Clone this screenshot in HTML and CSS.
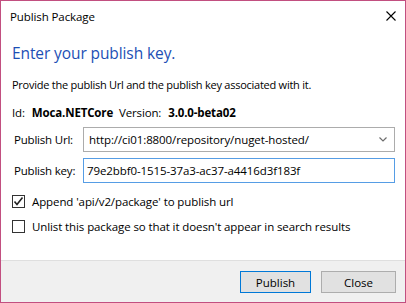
FILE: index.html
```html
<!DOCTYPE html>
<html>
<head>
<meta charset="utf-8">
<link rel="stylesheet" href="styles.css">
</head>
<body>
<div class="window">
  <div class="titlebar">
    <span class="title">Publish Package</span>
    <svg class="close" width="10" height="10" viewBox="0 0 10 10"><path d="M0.5 0.5 L9.5 9.5 M9.5 0.5 L0.5 9.5" stroke="#000" stroke-width="1.1" fill="none"/></svg>
  </div>
  <div class="content">
    <div class="heading">Enter your publish key.</div>
    <div class="desc">Provide the publish Url and the publish key associated with it.</div>
    <div class="idrow">
      <span>Id:</span><b class="val">Moca.NETCore</b><span class="ver">Version:</span><b class="val">3.0.0-beta02</b>
    </div>
    <div class="form">
      <label class="lbl">Publish Url:</label>
      <div class="combo">
        <span>http://ci01:8800/repository/nuget-hosted/</span>
        <svg class="chev" width="8" height="5" viewBox="0 0 8 5"><path d="M0.5 0.5 L4 4 L7.5 0.5" stroke="#6d6d6d" stroke-width="1.2" fill="none"/></svg>
      </div>
      <label class="lbl">Publish key:</label>
      <div class="textbox">79e2bbf0-1515-37a3-ac37-a4416d3f183f</div>
    </div>
    <div class="check">
      <span class="box"><svg width="11" height="11" viewBox="0 0 11 11"><path d="M1.5 5.5 L4 8.5 L9.5 1.5" stroke="#222" stroke-width="1.6" fill="none"/></svg></span>
      <span>Append 'api/v2/package' to publish url</span>
    </div>
    <div class="check">
      <span class="box"></span>
      <span>Unlist this package so that it doesn't appear in search results</span>
    </div>
  </div>
  <div class="footer">
    <button class="btn primary">Publish</button>
    <button class="btn">Close</button>
  </div>
</div>
</body>
</html>
```
FILE: styles.css
```css
html, body {
  margin: 0;
  padding: 0;
  background: #ffffff;
}
.window {
  width: 406px;
  height: 303px;
  box-sizing: border-box;
  border: 1px solid #c24f80;
  display: flex;
  flex-direction: column;
  font-family: "Open Sans", "Noto Sans", sans-serif;
  font-size: 11.5px;
  color: #000;
  background: #fff;
}
.titlebar {
  height: 30px;
  display: flex;
  align-items: center;
  justify-content: space-between;
  padding: 0 9px 0 9px;
  flex: none;
}
.title {
  font-size: 11.5px;
  letter-spacing: -0.1px;
}
.content {
  flex: 1;
  padding: 11px 10px 0 11px;
  display: flex;
  flex-direction: column;
}
.heading {
  color: #1c4fb5;
  font-size: 15.5px;
  line-height: 22px;
  letter-spacing: -0.1px;
}
.desc {
  margin-top: 13px;
  line-height: 16px;
  font-size: 11px;
  letter-spacing: -0.25px;
}
.idrow {
  margin-top: 12px;
  line-height: 16px;
  display: flex;
  letter-spacing: -0.15px;
}
.idrow .val {
  font-weight: 700;
  margin-left: 7px;
  margin-right: 6px;
}
.form {
  margin-top: 6px;
  display: grid;
  grid-template-columns: 71px 1fr;
  row-gap: 6px;
  align-items: center;
}
.lbl {
  padding-left: 2px;
  letter-spacing: -0.2px;
}
.combo, .textbox {
  height: 25px;
  box-sizing: border-box;
  display: flex;
  align-items: center;
  letter-spacing: -0.1px;
}
.combo {
  border: 1px solid #acacac;
  padding: 0 7px 0 5px;
  justify-content: space-between;
}
.textbox {
  border: 1px solid #569de5;
  padding: 0 3px;
}
.check {
  display: flex;
  align-items: center;
  height: 13px;
  margin-top: 12px;
  letter-spacing: -0.1px;
}
.box {
  width: 13px;
  height: 13px;
  box-sizing: border-box;
  border: 1px solid #333;
  margin-right: 7px;
  display: flex;
  align-items: center;
  justify-content: center;
  background: #fff;
}
.footer {
  height: 42px;
  flex: none;
  background: #f0f0f0;
  border-top: 1px solid #dfdfdf;
  display: flex;
  justify-content: flex-end;
  align-items: flex-start;
  padding: 10px 9px 0 0;
  gap: 10px;
  box-sizing: border-box;
}
.btn {
  width: 75px;
  height: 22px;
  box-sizing: border-box;
  border: 1px solid #adadad;
  background: #e1e1e1;
  font-family: "Open Sans", "Noto Sans", sans-serif;
  font-size: 11.5px;
  color: #000;
  padding: 0;
  margin: 0;
}
.btn.primary {
  width: 71px;
  border: 1px solid #0078d7;
}
```
